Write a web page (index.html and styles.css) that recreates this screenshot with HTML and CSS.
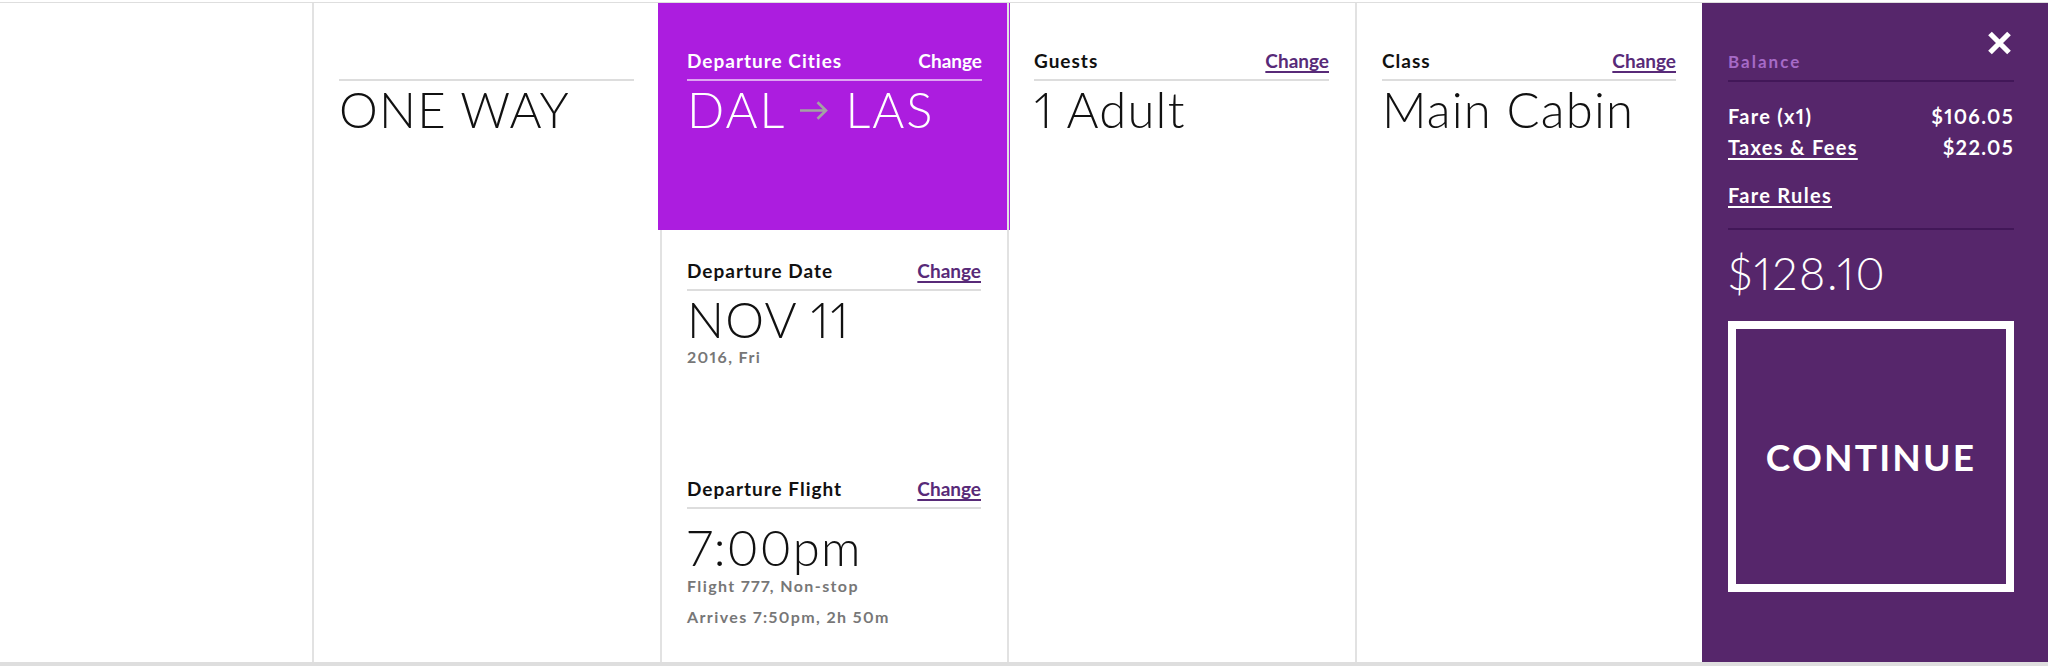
FILE: index.html
```html
<!DOCTYPE html>
<html lang="en">
<head>
<meta charset="utf-8">
<title>Booking summary</title>
<link rel="stylesheet" href="styles.css">
</head>
<body>
<div class="bar">
  <div class="spacer"></div>

  <div class="col">
    <div class="block">
      <div class="head"><span class="label"></span></div>
      <div class="big">ONE WAY</div>
    </div>
  </div>

  <div class="col col-dep">
    <div class="block cities">
      <div class="head"><span class="label">Departure Cities</span><a class="change">Change</a></div>
      <div class="big">DAL<svg class="arrow" width="28" height="19" viewBox="0 0 28 19"><path d="M0 9.5H26M17.5 1.2L26 9.5L17.5 17.8" fill="none" stroke="#a3a3a3" stroke-width="2.6"/></svg>LAS</div>
    </div>
    <div class="block date">
      <div class="head"><span class="label">Departure Date</span><a class="change">Change</a></div>
      <div class="big">NOV 11</div>
      <div class="sub">2016, Fri</div>
    </div>
    <div class="block flight">
      <div class="head"><span class="label">Departure Flight</span><a class="change">Change</a></div>
      <div class="big big-time">7:00pm</div>
      <div class="sub sub-first">Flight 777, Non-stop</div>
      <div class="sub sub-second">Arrives 7:50pm, 2h 50m</div>
    </div>
  </div>

  <div class="col">
    <div class="block">
      <div class="head"><span class="label">Guests</span><a class="change">Change</a></div>
      <div class="big">1 Adult</div>
    </div>
  </div>

  <div class="col">
    <div class="block">
      <div class="head"><span class="label">Class</span><a class="change">Change</a></div>
      <div class="big">Main Cabin</div>
    </div>
  </div>

  <div class="panel">
    <svg class="close" width="25" height="24" viewBox="0 0 25 24"><path d="M3 2.5L22 21.5M22 2.5L3 21.5" stroke="#fff" stroke-width="5.2" fill="none"/></svg>
    <div class="panel-head">Balance</div>
    <div class="row row-fare"><span>Fare (x1)</span><span>$106.05</span></div>
    <div class="row row-tax"><a class="plink">Taxes &amp; Fees</a><span>$22.05</span></div>
    <div class="row row-rules"><a class="plink">Fare Rules</a></div>
    <div class="total">$128.10</div>
    <a class="continue">CONTINUE</a>
  </div>
</div>
</body>
</html>
```

FILE: styles.css
```css
* {
  box-sizing: border-box;
  margin: 0;
  padding: 0;
}

html, body {
  background: #fff;
}

body {
  font-family: "Lato", "Liberation Sans", sans-serif;
  color: #111;
  overflow: hidden;
  font-variant-numeric: proportional-nums;
}

.bar {
  display: grid;
  grid-template-columns: 312px 348px 347px 348px 347px 1fr;
  margin-top: 2px;
  height: 664px;
  border-top: 1px solid #dedede;
  border-bottom: 4px solid #dedede;
}

.col {
  border-left: 2px solid #e2e2e2;
}

.block {
  padding: 47px 26px 0 25px;
}

.head {
  display: flex;
  justify-content: space-between;
  align-items: baseline;
  min-height: 31px;
  padding-bottom: 7px;
  border-bottom: 2px solid #dddddd;
}

.label {
  font-size: 19px;
  line-height: 22px;
  font-weight: 700;
  letter-spacing: 1px;
  color: #111;
}

.change {
  font-size: 19px;
  line-height: 22px;
  font-weight: 700;
  letter-spacing: 0;
  color: #582a78;
  text-decoration: underline;
  text-decoration-thickness: 1.5px;
  text-underline-offset: 3px;
}

.big {
  font-size: 49px;
  line-height: 56px;
  font-weight: 300;
  letter-spacing: 1.2px;
  color: #111;
  white-space: nowrap;
}

/* Departure column */
.cities {
  background: #ac1ddf;
  height: 227px;
  margin: 0 -3px 0 -4px;
  padding: 47px 28px 0 29px;
  color: #fff;
}

.cities .head {
  border-bottom-color: rgba(255, 255, 255, 0.6);
}

.cities .label,
.cities .change,
.cities .big {
  color: #fff;
}

.cities .change {
  text-decoration: none;
}

.cities .big {
  letter-spacing: 2px;
}

.arrow {
  margin: 0 17px 0 14px;
  vertical-align: 8px;
}

.date {
  height: 217px;
  padding-top: 30px;
}

.flight {
  padding-top: 31px;
}

.big-time {
  margin-top: 10px;
}

.sub {
  font-size: 16px;
  line-height: 20px;
  font-weight: 700;
  letter-spacing: 1.4px;
  color: #777777;
}

.sub-first {
  margin-top: 1px;
}

.sub-second {
  margin-top: 11px;
}

/* Balance panel */
.panel {
  position: relative;
  background: #56266b;
  padding: 49px 34px 0 26px;
  color: #fff;
}

.close {
  position: absolute;
  top: 28px;
  right: 36px;
}

.panel-head {
  font-size: 17px;
  line-height: 20px;
  font-weight: 700;
  letter-spacing: 2px;
  color: #a66ac7;
  padding-bottom: 8px;
  border-bottom: 2px solid #421758;
}

.row {
  display: flex;
  justify-content: space-between;
  font-size: 20px;
  line-height: 24px;
  font-weight: 700;
  letter-spacing: 1.3px;
}

.row-fare {
  margin-top: 22px;
}

.row-tax {
  margin-top: 7px;
}

.row-rules {
  margin-top: 24px;
  padding-bottom: 21px;
  border-bottom: 2px solid #421758;
}

.plink {
  color: #fff;
  text-decoration: underline;
  text-decoration-thickness: 1.5px;
  text-underline-offset: 3px;
}

.total {
  margin-top: 17px;
  font-size: 45px;
  line-height: 52px;
  font-weight: 300;
  letter-spacing: 1.6px;
}

.continue {
  display: flex;
  align-items: center;
  justify-content: center;
  margin-top: 22px;
  height: 271px;
  border: 8px solid #fff;
  color: #fff;
  font-size: 37px;
  font-weight: 700;
  letter-spacing: 2.2px;
}
```
